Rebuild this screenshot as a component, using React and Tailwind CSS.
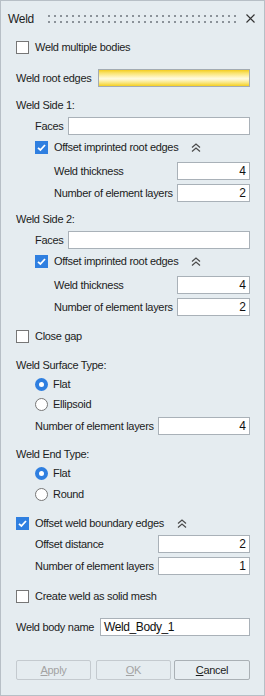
import React from "react";

const FONT = { fontFamily: '"Liberation Sans", Arial, sans-serif' };

function Check({ checked }) {
  if (checked) {
    return (
      <div className="w-[13px] h-[13px] bg-[#2f7fe0] flex items-center justify-center shrink-0">
        <svg width="11" height="11" viewBox="0 0 11 11">
          <path d="M2 5.8 L4.4 8 L9 3" fill="none" stroke="#ffffff" strokeWidth="1.8" />
        </svg>
      </div>
    );
  }
  return <div className="w-[13px] h-[13px] bg-white border border-[#767676] shrink-0" />;
}

function Radio({ checked }) {
  if (checked) {
    return (
      <div className="w-[13px] h-[13px] rounded-full bg-[#2f7fe0] flex items-center justify-center shrink-0">
        <div className="w-[5px] h-[5px] rounded-full bg-white" />
      </div>
    );
  }
  return <div className="w-[13px] h-[13px] rounded-full bg-white border border-[#767676] shrink-0" />;
}

function Chevrons() {
  return (
    <svg width="10" height="10" viewBox="0 0 10 10" className="shrink-0">
      <path d="M1 4.5 L5 1 L9 4.5" fill="none" stroke="#4a4a4a" strokeWidth="1.2" />
      <path d="M1 8.5 L5 5 L9 8.5" fill="none" stroke="#4a4a4a" strokeWidth="1.2" />
    </svg>
  );
}

function Field({ w, value, className = "" }) {
  return (
    <div
      className={`h-[18px] bg-white border border-[#a9b1b8] flex items-center justify-end pr-[3px] text-[12px] tracking-normal text-[#111] shrink-0 ${className}`}
      style={{ width: w }}
    >
      {value}
    </div>
  );
}

function Grip() {
  const dots = [];
  for (let i = 0; i < 32; i++) {
    dots.push(<rect key={"a" + i} x={i * 6} y={0} width="2" height="2" fill="#8b9299" />);
    dots.push(<rect key={"b" + i} x={i * 6} y={6} width="2" height="2" fill="#8b9299" />);
  }
  return (
    <svg width="188" height="8" viewBox="0 0 188 8" className="mt-[4px] shrink-0">
      {dots}
    </svg>
  );
}

function SideBlock({ label, mt }) {
  return (
    <>
      <div className={`h-[16px] flex items-center ${mt}`}>{label}</div>
      <div className="h-[18px] mt-[4px] flex items-center pl-[19px]">
        <span>Faces</span>
        <div className="ml-auto w-[182px] h-[18px] bg-white border border-[#a9b1b8]" />
      </div>
      <div className="h-[13px] mt-[6px] flex items-center pl-[19px]">
        <Check checked />
        <span className="ml-[6px]">Offset imprinted root edges</span>
        <span className="ml-[13px]">
          <Chevrons />
        </span>
      </div>
      <div className="h-[18px] mt-[8px] flex items-center pl-[38px]">
        <span>Weld thickness</span>
        <Field w={73} value="4" className="ml-auto" />
      </div>
      <div className="h-[18px] mt-[4px] flex items-center pl-[38px]">
        <span>Number of element layers</span>
        <Field w={73} value="2" className="ml-auto" />
      </div>
    </>
  );
}

export default function App() {
  return (
    <div
      className="w-[265px] h-[696px] border border-[#b7bfc6] bg-[#e5ecf0] text-[11px] tracking-[-0.3px] text-[#1c1c1c] leading-none overflow-hidden whitespace-nowrap"
      style={FONT}
    >
      {/* title */}
      <div className="h-[16px] mt-[10px] flex items-start pl-[7px]">
        <div className="w-[40px] h-[16px] flex items-center text-[12px]">Weld</div>
        <Grip />
        <svg width="9" height="9" viewBox="0 0 9 9" className="ml-[10px] mt-[3px] shrink-0">
          <path d="M0.5 0.5 L8.5 8.5 M8.5 0.5 L0.5 8.5" stroke="#333" strokeWidth="1.1" />
        </svg>
      </div>

      <div className="pl-[15px] pr-[14px] flex flex-col">
        <div className="h-[13px] mt-[14px] flex items-center">
          <Check />
          <span className="ml-[6px]">Weld multiple bodies</span>
        </div>

        <div className="h-[18px] mt-[15px] flex items-center">
          <span>Weld root edges</span>
          <div className="ml-auto w-[152px] h-[18px] border border-[#a3abb2] bg-[linear-gradient(to_bottom,#f4cd1e_0%,#f9e26a_18%,#fff6c4_45%,#fffbe2_55%,#f9e67e_80%,#f4cf22_100%)]" />
        </div>

        <SideBlock label="Weld Side 1:" mt="mt-[10px]" />
        <SideBlock label="Weld Side 2:" mt="mt-[9px]" />

        <div className="h-[13px] mt-[14px] flex items-center">
          <Check />
          <span className="ml-[6px]">Close gap</span>
        </div>

        <div className="h-[16px] mt-[14px] flex items-center">Weld Surface Type:</div>
        <div className="h-[14px] mt-[4px] flex items-center pl-[19px]">
          <Radio checked />
          <span className="ml-[5px]">Flat</span>
        </div>
        <div className="h-[14px] mt-[6px] flex items-center pl-[19px]">
          <Radio />
          <span className="ml-[5px]">Ellipsoid</span>
        </div>
        <div className="h-[18px] mt-[6px] flex items-center pl-[19px]">
          <span>Number of element layers</span>
          <Field w={92} value="4" className="ml-auto" />
        </div>

        <div className="h-[16px] mt-[11px] flex items-center">Weld End Type:</div>
        <div className="h-[14px] mt-[4px] flex items-center pl-[19px]">
          <Radio checked />
          <span className="ml-[5px]">Flat</span>
        </div>
        <div className="h-[14px] mt-[7px] flex items-center pl-[19px]">
          <Radio />
          <span className="ml-[5px]">Round</span>
        </div>

        <div className="h-[13px] mt-[16px] flex items-center">
          <Check checked />
          <span className="ml-[6px]">Offset weld boundary edges</span>
          <span className="ml-[13px]">
            <Chevrons />
          </span>
        </div>
        <div className="h-[18px] mt-[5px] flex items-center pl-[19px]">
          <span>Offset distance</span>
          <Field w={92} value="2" className="ml-auto" />
        </div>
        <div className="h-[18px] mt-[4px] flex items-center pl-[19px]">
          <span>Number of element layers</span>
          <Field w={92} value="1" className="ml-auto" />
        </div>

        <div className="h-[13px] mt-[15px] flex items-center">
          <Check />
          <span className="ml-[6px]">Create weld as solid mesh</span>
        </div>

        <div className="h-[18px] mt-[15px] flex items-center">
          <span>Weld body name</span>
          <div className="ml-auto w-[150px] h-[18px] bg-white border border-[#a9b1b8] flex items-center pl-[3px] text-[12px] tracking-[-0.4px] text-[#111]">
            Weld_Body_1
          </div>
        </div>

        <div className="h-[20px] mt-[24px] flex items-center">
          <button className="w-[75px] h-[20px] rounded-[2px] border border-[#c4cacf] bg-[#e5ecf0] text-[#a3a3a3] text-[11px] flex items-center justify-center">
            <span><u>A</u>pply</span>
          </button>
          <button className="ml-[5px] w-[75px] h-[20px] rounded-[2px] border border-[#c4cacf] bg-[#e5ecf0] text-[#a3a3a3] text-[11px] flex items-center justify-center">
            <span><u>O</u>K</span>
          </button>
          <button className="ml-auto w-[76px] h-[20px] rounded-[2px] border border-[#aab0b5] bg-[#e7edf1] text-[#1c1c1c] text-[11px] flex items-center justify-center">
            <span><u>C</u>ancel</span>
          </button>
        </div>
      </div>
    </div>
  );
}
